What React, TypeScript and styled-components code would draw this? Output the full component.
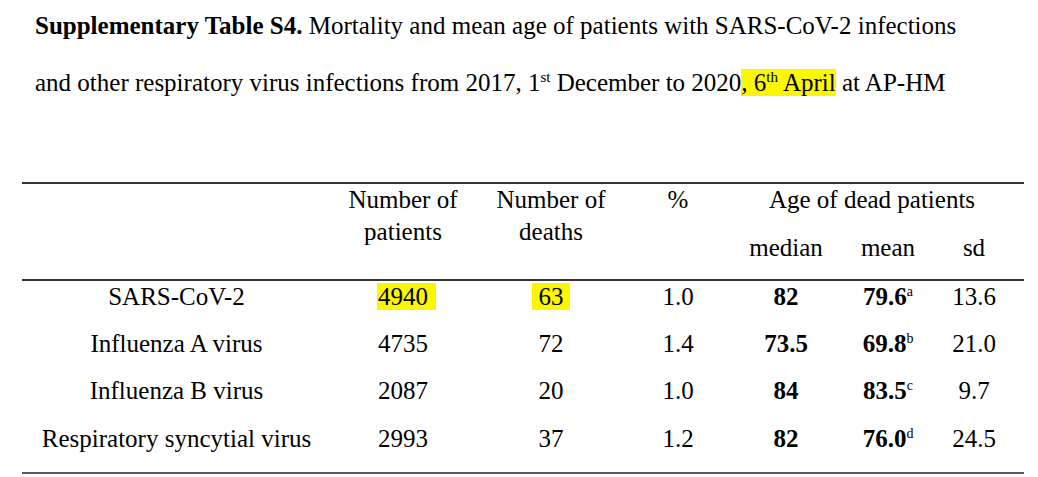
import React from "react";
import styled, { createGlobalStyle } from "styled-components";

const Global = createGlobalStyle`
  html, body { margin: 0; padding: 0; background: #fff; }
  body {
    width: 1038px; height: 477px; overflow: hidden;
    font-family: "Liberation Serif", "Times New Roman", serif;
    color: #000;
  }
`;

const Page = styled.div`
  display: flex;
  flex-direction: column;
`;

const Caption = styled.p`
  margin: -3px 0 0 35px;
  font-size: 25px;
  line-height: 57px;
  white-space: nowrap;
`;

const Strong = styled.b`
  font-weight: bold;
`;

const Sup = styled.sup`
  font-size: 15px;
  line-height: 0;
  vertical-align: 9px;
`;

const Mark = styled.span<{ $pl?: number; $pr?: number }>`
  background: #fbf700;
  padding: 0 ${(p) => p.$pr ?? 0}px 0 ${(p) => p.$pl ?? 0}px;
  margin: 0 -${(p) => p.$pr ?? 0}px 0 -${(p) => p.$pl ?? 0}px;
`;

const Table = styled.div`
  margin: 71px 0 0 22px;
  width: 1002px;
  box-sizing: border-box;
  padding-right: 9px;
  border-top: 2px solid #333;
  border-bottom: 2px solid #5a5a5a;
  font-size: 25px;
`;

const cols = "309px 144px 152px 102px 114px 90px 82px";

const Head = styled.div`
  display: grid;
  grid-template-columns: ${cols};
  grid-template-rows: 32px 32px;
  row-gap: 16px;
  padding-bottom: 15px;
  border-bottom: 2px solid #333;
  margin-right: -9px;
  padding-right: 9px;
  line-height: 32px;
  text-align: center;
`;

const HeadCell = styled.div<{ $col: string; $row: string }>`
  grid-column: ${(p) => p.$col};
  grid-row: ${(p) => p.$row};
  white-space: nowrap;
`;

const Body = styled.div`
  display: flex;
  flex-direction: column;
  padding-top: 2px;
`;

const Row = styled.div`
  display: grid;
  grid-template-columns: ${cols};
  height: 47.2px;
  line-height: 28px;
  text-align: center;
`;

const Cell = styled.div<{ $bold?: boolean }>`
  font-weight: ${(p) => (p.$bold ? "bold" : "normal")};
  white-space: nowrap;
`;

const Note = styled.sup`
  font-size: 14px;
  font-weight: normal;
  line-height: 0;
  vertical-align: 9px;
`;

type R = {
  name: string;
  patients: React.ReactNode;
  deaths: React.ReactNode;
  pct: string;
  median: string;
  mean: string;
  note: string;
  sd: string;
};

const rows: R[] = [
  {
    name: "SARS-CoV-2",
    patients: <Mark $pl={1} $pr={8}>4940</Mark>,
    deaths: <Mark $pl={7} $pr={6}>63</Mark>,
    pct: "1.0",
    median: "82",
    mean: "79.6",
    note: "a",
    sd: "13.6",
  },
  { name: "Influenza A virus", patients: "4735", deaths: "72", pct: "1.4", median: "73.5", mean: "69.8", note: "b", sd: "21.0" },
  { name: "Influenza B virus", patients: "2087", deaths: "20", pct: "1.0", median: "84", mean: "83.5", note: "c", sd: "9.7" },
  { name: "Respiratory syncytial virus", patients: "2993", deaths: "37", pct: "1.2", median: "82", mean: "76.0", note: "d", sd: "24.5" },
];

export default function App() {
  return (
    <Page>
      <Global />
      <Caption>
        <Strong>Supplementary Table S4.</Strong> Mortality and mean age of patients with SARS-CoV-2 infections
        <br />
        and other respiratory virus infections from 2017, 1<Sup>st</Sup> December to 2020
        <Mark>, 6<Sup>th</Sup> April</Mark> at AP-HM
      </Caption>
      <Table>
        <Head>
          <HeadCell $col="2" $row="1 / 3">Number of<br />patients</HeadCell>
          <HeadCell $col="3" $row="1 / 3">Number of<br />deaths</HeadCell>
          <HeadCell $col="4" $row="1 / 3">%</HeadCell>
          <HeadCell $col="5 / 8" $row="1">Age of dead patients</HeadCell>
          <HeadCell $col="5" $row="2">median</HeadCell>
          <HeadCell $col="6" $row="2">mean</HeadCell>
          <HeadCell $col="7" $row="2">sd</HeadCell>
        </Head>
        <Body>
          {rows.map((r) => (
            <Row key={r.name}>
              <Cell>{r.name}</Cell>
              <Cell>{r.patients}</Cell>
              <Cell>{r.deaths}</Cell>
              <Cell>{r.pct}</Cell>
              <Cell $bold>{r.median}</Cell>
              <Cell $bold>
                {r.mean}
                <Note>{r.note}</Note>
              </Cell>
              <Cell>{r.sd}</Cell>
            </Row>
          ))}
        </Body>
      </Table>
    </Page>
  );
}
